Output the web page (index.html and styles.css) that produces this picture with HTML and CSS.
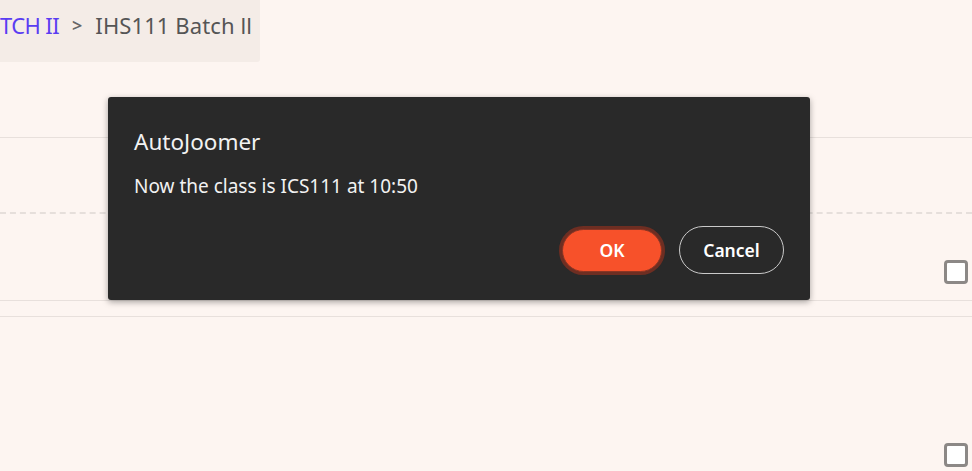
FILE: index.html
```html
<!DOCTYPE html>
<html>
<head>
<meta charset="utf-8">
<link rel="stylesheet" href="styles.css">
</head>
<body>
<div class="page">
  <nav class="crumbs">
    <span class="crumb-link">TCH II</span>
    <span class="sep">&gt;</span>
    <span class="crumb-current">IHS111 Batch ll</span>
  </nav>
  <div class="list">
    <div class="row row-top"></div>
    <div class="row row-dashed">
      <span class="check"></span>
    </div>
    <div class="row row-gap"></div>
    <div class="row row-bottom">
      <span class="check"></span>
    </div>
  </div>
  <div class="dialog">
    <div class="dialog-title">AutoJoomer</div>
    <div class="dialog-msg">Now the class is ICS111 at 10:50</div>
    <div class="dialog-actions">
      <button class="btn btn-ok">OK</button>
      <button class="btn btn-cancel">Cancel</button>
    </div>
  </div>
</div>
</body>
</html>
```
FILE: styles.css
```css
* { box-sizing: border-box; }
html, body { margin: 0; padding: 0; }
body {
  background: #fdf5f1;
  font-family: "Noto Sans", "Open Sans", sans-serif;
  width: 972px;
  height: 471px;
  overflow: hidden;
}
.page { position: relative; height: 471px; }
.crumbs {
  width: 260px;
  height: 62px;
  background: #f4ece7;
  border-bottom-right-radius: 3px;
  display: flex;
  align-items: center;
  gap: 13px;
  padding: 0 0 12px 0;
  font-size: 22px;
  color: #555;
}
.crumb-link { color: #5a3df2; letter-spacing: -0.6px; }
.sep { font-size: 18px; color: #666; font-weight: 600; }
.crumb-current { letter-spacing: 0.1px; }
.list { display: flex; flex-direction: column; }
.row-top { height: 75px; margin-top: 75px; border-top: 1px solid #e8e0dc; }
.row-dashed {
  height: 88px;
  border-top: 2px dashed #e6dfdb;
  display: flex;
  justify-content: flex-end;
  align-items: flex-end;
  padding: 0 4px 16px 0;
}
.row-gap { height: 16px; border-top: 1px solid #e8e0dc; }
.row-bottom {
  height: 155px;
  border-top: 1px solid #e8e0dc;
  display: flex;
  justify-content: flex-end;
  align-items: flex-end;
  padding: 0 4px 0 0;
}
.check {
  width: 24px;
  height: 24px;
  border: 3px solid #8c8886;
  border-radius: 4px;
  background: #fff;
}
.row-bottom .check { margin-bottom: 4px; }
.dialog {
  position: absolute;
  left: 108px;
  top: 97px;
  width: 702px;
  height: 203px;
  background: #292929;
  border-radius: 3px;
  box-shadow: 0 2px 6px rgba(0,0,0,0.35);
  padding: 29px 26px 0 26px;
  color: #f2f2f2;
}
.dialog-title { font-size: 22.5px; line-height: 32px; }
.dialog-msg { font-size: 19px; line-height: 26px; margin-top: 15px; }
.dialog-actions {
  display: flex;
  justify-content: flex-end;
  align-items: center;
  gap: 18px;
  margin-top: 27px;
}
.btn {
  font-family: "Noto Sans", "Open Sans", sans-serif;
  font-size: 17.5px;
  font-weight: 600;
  border-radius: 24px;
  color: #fff;
  cursor: pointer;
}
.btn-ok {
  width: 100px;
  height: 43px;
  background: #f7512a;
  border: 1px solid #8a3524;
  box-shadow: 0 0 0 3px #6e2e22;
  margin-right: -1px;
}
.btn-cancel {
  width: 105px;
  height: 48px;
  background: transparent;
  border: 1px solid #c9c9c9;
}
```
